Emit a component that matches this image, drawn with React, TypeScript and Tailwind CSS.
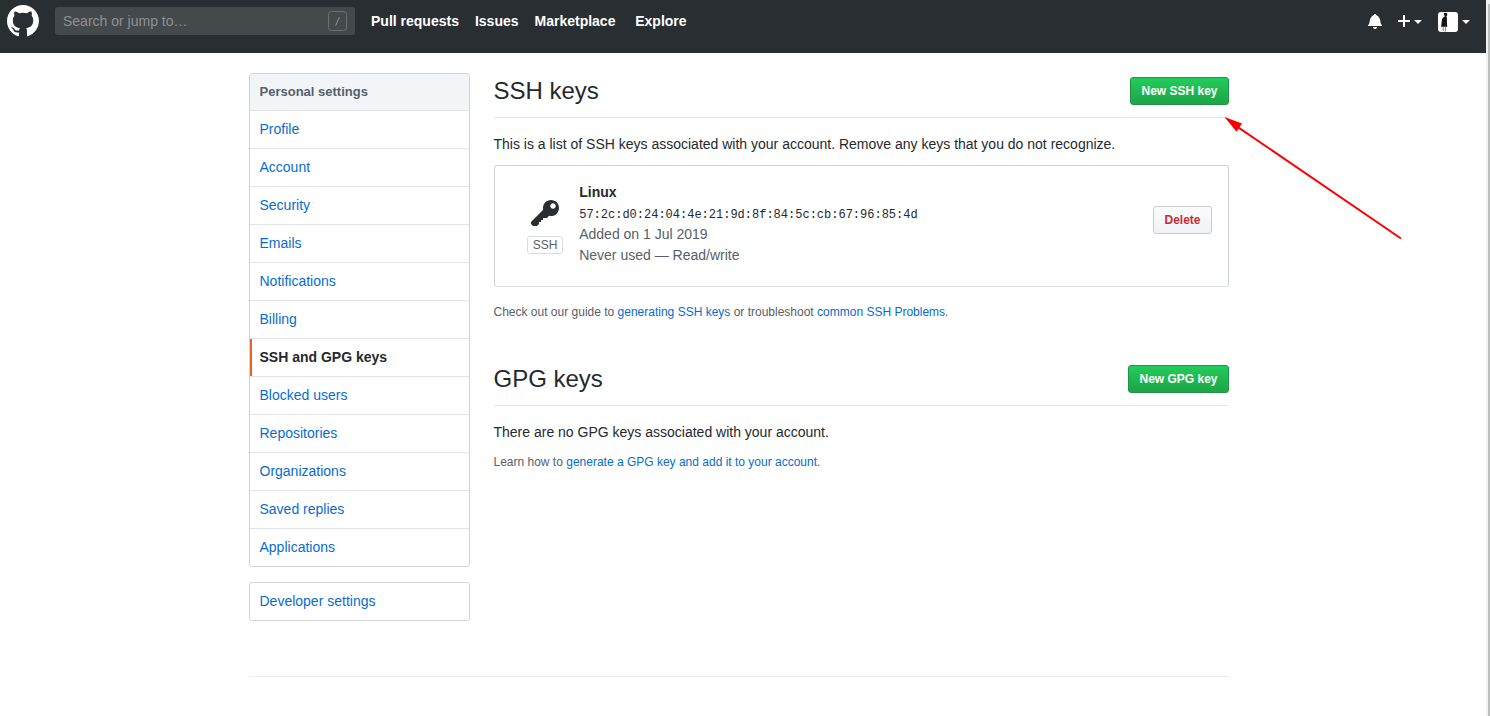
import React from "react";

const MARK =
  "M8 0C3.58 0 0 3.58 0 8c0 3.54 2.29 6.53 5.47 7.59.4.07.55-.17.55-.38 0-.19-.01-.82-.01-1.49-2.01.37-2.53-.49-2.69-.94-.09-.23-.48-.94-.82-1.13-.28-.15-.68-.52-.01-.53.63-.01 1.08.58 1.23.82.72 1.21 1.87.87 2.33.66.07-.52.28-.87.51-1.07-1.78-.2-3.64-.89-3.64-3.95 0-.87.31-1.59.82-2.15-.08-.2-.36-1.02.08-2.12 0 0 .67-.21 2.2.82.64-.18 1.32-.27 2-.27.68 0 1.36.09 2 .27 1.53-1.04 2.2-.82 2.2-.82.44 1.1.16 1.92.08 2.12.51.56.82 1.27.82 2.15 0 3.07-1.87 3.75-3.65 3.95.29.25.54.73.54 1.48 0 1.07-.01 1.93-.01 2.2 0 .21.15.46.55.38A8.013 8.013 0 0 0 16 8c0-4.42-3.58-8-8-8z";
const BELL =
  "M14 12v1H0v-1l.73-.58c.77-.77.81-2.55 1.19-4.42C2.69 3.23 6 2 6 2c0-.55.45-1 1-1s1 .45 1 1c0 0 3.39 1.23 4.16 5 .38 1.88.42 3.66 1.19 4.42l.66.58H14zm-7 4c1.11 0 2-.89 2-2H5c0 1.11.89 2 2 2z";
const KEY =
  "M12.83 2.17C12.08 1.42 11.14 1.03 10 1c-1.13.03-2.08.42-2.83 1.17S6.04 3.86 6.01 5c0 .3.03.59.09.89L0 12v1l1 1h2l1-1v-1h1v-1h1v-1h2l1.09-1.11c.3.08.59.11.91.11 1.14-.03 2.08-.42 2.83-1.17S13.97 6.14 14 5c-.03-1.14-.42-2.08-1.17-2.83zM11 5.38c-.77 0-1.38-.61-1.38-1.38 0-.77.61-1.38 1.38-1.38.77 0 1.38.61 1.38 1.38 0 .77-.61 1.38-1.38 1.38z";

const MENU = [
  "Profile",
  "Account",
  "Security",
  "Emails",
  "Notifications",
  "Billing",
  "SSH and GPG keys",
  "Blocked users",
  "Repositories",
  "Organizations",
  "Saved replies",
  "Applications",
];

function Caret({ className }: { className: string }) {
  return <span className={`h-0 w-0 border-x-4 border-t-4 border-x-transparent border-t-white ${className}`} />;
}

function Header() {
  return (
    <header className="flex h-[53px] items-start bg-[#292e32] pl-[7px] text-white">
      <svg className="mt-[5px] h-8 w-8 shrink-0" viewBox="0 0 16 16" fill="currentColor">
        <path fillRule="evenodd" d={MARK} />
      </svg>
      <div className="mt-[7px] ml-4 flex h-7 w-[300px] items-center rounded-[3px] bg-[#44494c] pr-2 pl-2">
        <span className="flex-1 text-[14px] text-[#8e9193]">Search or jump to…</span>
        <svg className="h-5 w-[19px]" viewBox="0 0 19 20" fill="none" stroke="#6c7072">
          <rect x="0.5" y="0.5" width="18" height="19" rx="3" />
          <path d="M11.3 6.2 7.7 14.6" stroke="#8e9193" />
        </svg>
      </div>
      <nav className="mt-[7px] ml-4 flex h-7 items-center gap-4 text-[14px] font-bold">
        <a>Pull requests</a>
        <a>Issues</a>
        <a>Marketplace</a>
        <a className="ml-[3.8px]">Explore</a>
      </nav>
      <div className="ml-auto flex pr-4">
        <svg className="mt-[13px] h-4 w-[14px]" viewBox="0 0 14 16" fill="currentColor">
          <path d={BELL} />
        </svg>
        <svg className="mt-[13px] ml-4 h-4 w-3" viewBox="0 0 12 16" fill="currentColor">
          <path d="M12 9H7v5H5V9H0V7h5V2h2v5h5v2z" />
        </svg>
        <Caret className="mt-5 ml-1" />
        <svg className="mt-3 ml-4 h-5 w-5 rounded-[3px]" viewBox="0 0 20 20">
          <rect width="20" height="20" fill="#fff" />
          <path
            d="M5.8 1.2 8 .7l1.3.8-.1 1.7-.8 1.3.6 2.2-.1 4 .4 4H7.7H6.4H3.1l.5-4.2.5-3.8L6.8 4.3l-.6-1.2z"
            fill="#151515"
          />
          <path d="M5.2 15v4M7.4 15v4.5" stroke="#777" strokeWidth=".9" />
        </svg>
        <Caret className="mt-5 ml-1" />
      </div>
    </header>
  );
}

function Sidebar() {
  return (
    <aside className="w-[221px] shrink-0 text-[14px] leading-[21px]">
      <nav className="overflow-hidden rounded-[3px] border border-[#d1d5da]">
        <h2 className="h-[37px] border-b border-[#e1e4e8] bg-[#f1f5f8] pt-[7px] pl-[9.5px] text-[13px] font-bold text-[#586069]">
          Personal settings
        </h2>
        {MENU.map((item) =>
          item === "SSH and GPG keys" ? (
            <div key={item} className="flex h-[38px] border-b border-[#e1e4e8] font-bold text-[#24292e]">
              <span className="w-[2px] bg-[#e8622a]" />
              <span className="pt-2 pl-[7.5px]">{item}</span>
            </div>
          ) : (
            <a
              key={item}
              className="block h-[38px] border-b border-[#e1e4e8] pt-2 pl-[9.5px] text-[#076cd3] last:h-[37px] last:border-b-0"
            >
              {item}
            </a>
          ),
        )}
      </nav>
      <nav className="mt-[15px] h-[39px] rounded-[3px] border border-[#d1d5da] pt-2 pl-[9.5px] text-[#076cd3]">
        Developer settings
      </nav>
    </aside>
  );
}

function SectionHead({ title, action, width }: { title: string; action: string; width: string }) {
  return (
    <div className="flex h-[45px] items-start justify-between border-b border-[#e1e4e8]">
      <h2 className="text-[24px] leading-9">{title}</h2>
      <button
        className={`mt-1 h-7 rounded-[3px] border border-[#1e9446] bg-linear-to-b from-[#23cc5c] to-[#1ea446] text-[12px] leading-[26px] font-bold text-white ${width}`}
      >
        {action}
      </button>
    </div>
  );
}

function KeyCard() {
  return (
    <div className="mt-[10px] flex h-[122px] w-[735px] rounded-[3px] border border-[#d1d5da] border-b-[#dfe2e5]">
      <div className="ml-8 flex w-9 flex-col items-center">
        <svg className="mt-8 h-8 w-7" viewBox="0 0 14 16" fill="#292e32">
          <path fillRule="evenodd" d={KEY} />
        </svg>
        <span className="mt-[6px] h-[18px] w-9 rounded-[3px] border border-[#d9dcdf] pl-px text-center text-[12px] leading-4 text-[#586069]">
          SSH
        </span>
      </div>
      <div className="ml-[16.7px] flex-1 pt-4 text-[14px] leading-[21px] text-[#586069]">
        <div className="font-bold text-[#24292e]">Linux</div>
        <div className="pt-[2px] font-['Liberation_Mono',monospace] text-[12px] leading-[21px] text-[#24292e]">
          57:2c:d0:24:04:4e:21:9d:8f:84:5c:cb:67:96:85:4d
        </div>
        <div className="-mt-[2px]">Added on 1 Jul 2019</div>
        <div>Never used — Read/write</div>
      </div>
      <button className="mt-10 mr-4 h-7 w-[59px] rounded-[3px] border border-[#c9cccf] bg-linear-to-b from-[#fafbfc] to-[#eff3f6] pl-px text-[12px] leading-[26px] font-bold text-[#cb2a3b]">
        Delete
      </button>
    </div>
  );
}

export default function App() {
  return (
    <div className="relative flex h-[716px] overflow-hidden bg-white font-['Liberation_Sans',Arial,sans-serif] text-[#24292e]">
      <div className="flex flex-1 flex-col">
        <Header />
        <div className="ml-[249px] flex w-[980px] pt-5">
          <Sidebar />
          <main className="ml-[23.5px] flex-1">
            <SectionHead title="SSH keys" action="New SSH key" width="w-[99px]" />
            <p className="mt-4 text-[14px] leading-[21px]">
              This is a list of SSH keys associated with your account. Remove any keys that you do not recognize.
            </p>
            <KeyCard />
            <p className="mt-4 text-[12px] leading-[18px] text-[#586069]">
              Check out our guide to <a className="text-[#076cd3]">generating SSH keys</a> or troubleshoot{" "}
              <a className="text-[#076cd3]">common SSH Problems</a>.
            </p>
            <div className="mt-10">
              <SectionHead title="GPG keys" action="New GPG key" width="w-[101px]" />
            </div>
            <p className="mt-4 text-[14px] leading-[21px]">There are no GPG keys associated with your account.</p>
            <p className="mt-[10px] text-[12px] leading-[18px] text-[#586069]">
              Learn how to <a className="text-[#076cd3]">generate a GPG key and add it to your account</a>.
            </p>
          </main>
        </div>
        <div className="mt-[55px] ml-[249px] w-[980px] border-t border-[#eaecef]" />
      </div>
      <div className="w-1 bg-[#f0f1f0] pt-1 pl-[2px]">
        <div className="h-full bg-[#bcbebd]" />
      </div>
      <svg className="pointer-events-none absolute top-[110px] left-[1220px] h-[135px] w-[190px]" viewBox="0 0 190 135">
        <path d="M16 15.8 181 128.5" stroke="#ff0000" strokeWidth="2" />
        <path d="M4.5 7 22 13.5 16.5 21.8z" fill="#ff0000" />
      </svg>
    </div>
  );
}
